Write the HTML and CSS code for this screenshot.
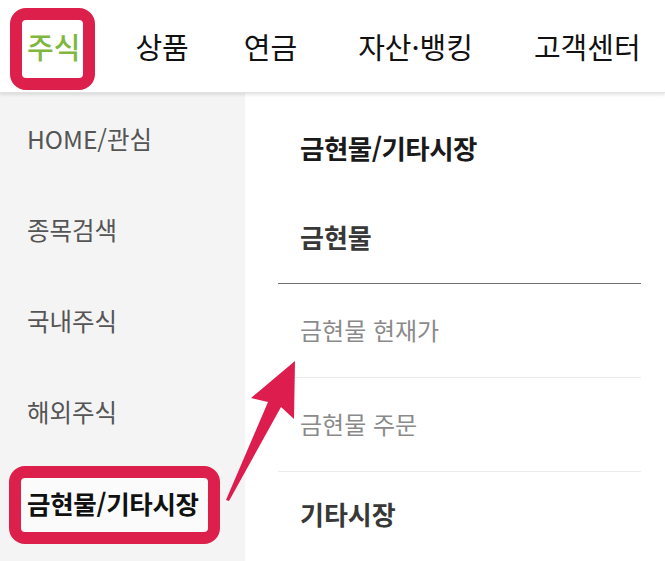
FILE: index.html
```html
<!DOCTYPE html>
<html lang="ko">
  <head>
    <meta charset="utf-8">
    <title>주식 메뉴</title>
    <link rel="stylesheet" href="styles.css">
  </head>
  <body>
    <div id="page">
        <div id="topnav">
            <span class="tab current marked">주식</span>
            <span class="tab">상품</span>
            <span class="tab">연금</span>
            <span class="tab wide">자산·뱅킹</span>
            <span class="tab wide">고객센터</span>
        </div>
        <div id="body">
            <ul id="leftmenu">
                <li><span>HOME/관심</span></li>
                <li><span>종목검색</span></li>
                <li><span>국내주식</span></li>
                <li><span>해외주식</span></li>
                <li class="active"><span class="marked">금현물/기타시장</span></li>
            </ul>
            <div id="submenu">
                <h2>금현물/기타시장</h2>
                <h3 class="group">금현물</h3>
                <ul class="items">
                    <li>금현물 현재가</li>
                    <li>금현물 주문</li>
                </ul>
                <h3 class="group plain">기타시장</h3>
            </div>
        </div>
        <!-- annotation arrow pointing at the submenu -->
        <svg id="arrow" width="665" height="561" viewBox="0 0 665 561">
            <polygon points="295,361 294,419 281,407 229,501 226,500 268,402 251,398" fill="#dc1d4d"/>
        </svg>
    </div>
  </body>
</html>
```

FILE: styles.css
```css
html, body {
    margin: 0;
    padding: 0;
    background: #fff;
    font-family: "Noto Sans CJK KR", "Noto Sans", sans-serif;
}
#page {
    position: relative;
    width: 665px;
    height: 561px;
    overflow: hidden;
}
#topnav {
    position: relative;
    z-index: 2;
    display: flex;
    align-items: flex-start;
    gap: 55px;
    height: 92px;
    padding-left: 27px;
    background: #fff;
    border-bottom: 1px solid #e2e2e2;
    box-shadow: 0 2px 3px rgba(0, 0, 0, 0.10);
}
.tab {
    position: relative;
    margin-top: 26px;
    font-size: 29px;
    line-height: 40px;
    color: #111;
}
.tab.wide {
    margin-left: 6px;
}
.tab.current {
    color: #80b83f;
    font-weight: 500;
}
.marked::before {
    content: "";
    position: absolute;
    z-index: -1;
    border: 12px solid #dc1f4b;
    border-radius: 16px;
    background: #fff;
}
.tab.marked::before {
    top: -18px;
    bottom: -24px;
    left: -17px;
    right: -15px;
}
#body {
    display: flex;
    height: 468px;
}
#leftmenu {
    position: relative;
    z-index: 0;
    width: 245px;
    margin: 0;
    padding: 0;
    list-style: none;
    background: #f4f4f4;
}
#leftmenu li {
    display: flex;
    align-items: center;
    height: 91px;
    padding-left: 27px;
    font-size: 24.5px;
    color: #555;
}
#leftmenu li span {
    position: relative;
    line-height: 30px;
}
#leftmenu li.active {
    font-weight: bold;
    font-size: 25.5px;
    color: #111;
    letter-spacing: -0.3px;
}
#leftmenu .marked::before {
    top: -22px;
    bottom: -26px;
    left: -18px;
    right: -21px;
    background: #fbfbfb;
}
#submenu {
    flex: 1;
    padding: 10px 24px 0 33px;
    background: #fff;
    box-shadow: -2px 0 5px rgba(0, 0, 0, 0.05);
}
#submenu h2 {
    margin: 0;
    padding-left: 22px;
    height: 92px;
    line-height: 90px;
    font-size: 26.5px;
    font-weight: bold;
    color: #1a1a1a;
    letter-spacing: -0.5px;
}
#submenu .group {
    margin: 0;
    padding-left: 22px;
    height: 88px;
    line-height: 84px;
    font-size: 26px;
    font-weight: bold;
    color: #383838;
    border-bottom: 1px solid #707070;
}
#submenu .group.plain {
    border-bottom: 0;
}
.items {
    margin: 0;
    padding: 0;
    list-style: none;
}
.items li {
    height: 93px;
    line-height: 92px;
    padding-left: 22px;
    font-size: 24px;
    color: #8a8a8a;
    border-bottom: 1px solid #ececec;
}
#arrow {
    position: absolute;
    top: 0;
    left: 0;
    z-index: 3;
    pointer-events: none;
}
```
